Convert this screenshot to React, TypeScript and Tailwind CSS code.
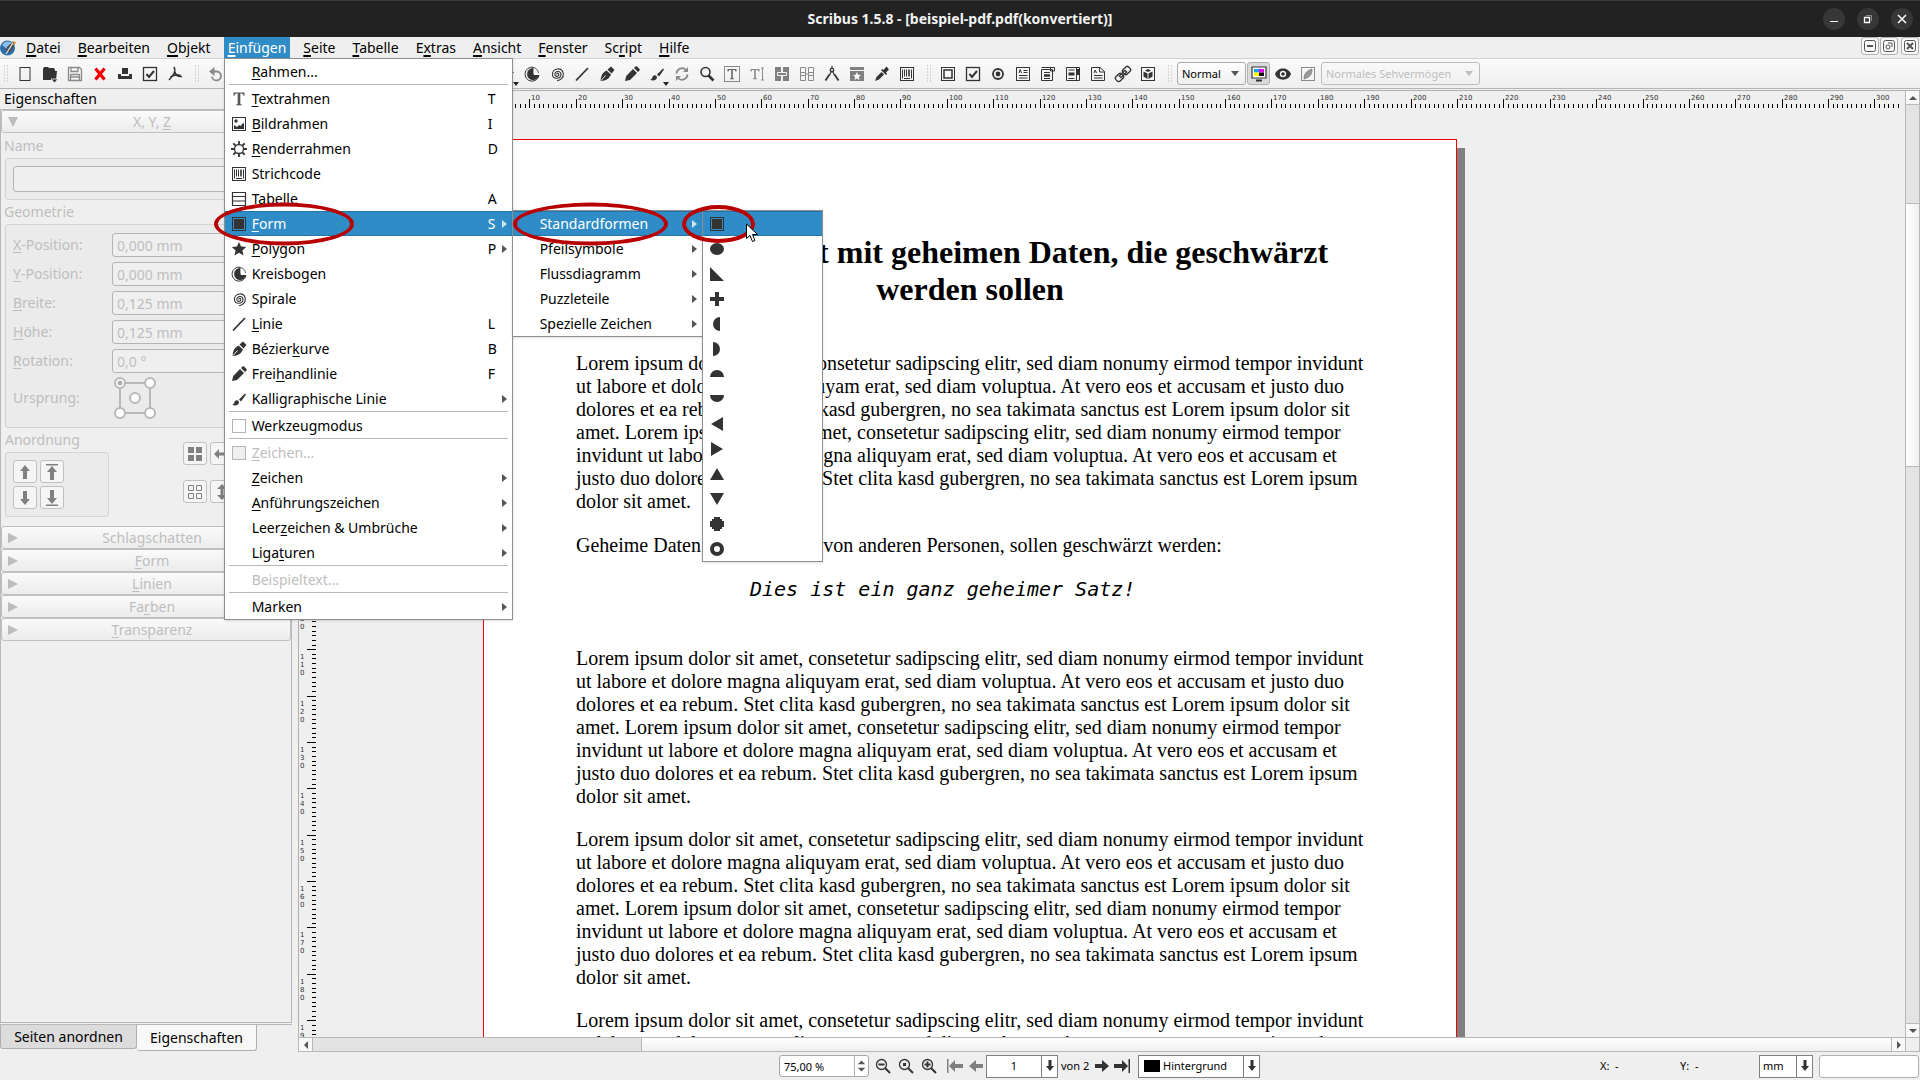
import { useState, type ReactNode } from "react";
import clsx from "clsx";

const DARK = "#333333";
const GREY = "#8a8a8a";

// Icons, all drawn on a 16x16 grid
const icons: Record<string, ReactNode> = {
  new: <rect x="3" y="1.500" width="10" height="13" fill="none" stroke={DARK} />,
  open: (
    <g fill={DARK}>
      <path d="M1 3l1-2h4l1 1h5l1 2v1h2l-1 9H1z" />
      <path d="M9 13h7l-3.500 4z" stroke="#f4f4f4" strokeWidth="0.800" />
    </g>
  ),
  save: (
    <g fill="none" stroke={GREY} strokeWidth="1.300">
      <path d="M1.500 1.500h11l2 2v11h-13z" />
      <path d="M4 1.500v4h7v-4M3.500 8.500h9M3.500 11h9M3.500 14v-6M12.500 14v-6" />
    </g>
  ),
  close: <path d="M3.500 2.500l9 11M12.500 2.500l-9 11" stroke="#f40000" strokeWidth="3.200" />,
  print: <path d="M5 2h6v6H5zM1 8h3v2h8V8h3v5H1z" fill={DARK} />,
  preflight: (
    <g fill="none" stroke={DARK}>
      <rect x="1.500" y="1.500" width="13" height="13" strokeWidth="1.300" />
      <path d="M4.500 8l2.500 3 5-6" strokeWidth="2" />
    </g>
  ),
  pdf: (
    <path
      d="M7 1c2 3 0 8-5 13M7.500 5c1 4 3 6 7.500 5.500M3.500 11c3-2 7-2.500 10-1.500"
      fill="none"
      stroke={DARK}
      strokeWidth="1.600"
    />
  ),
  undo: (
    <g>
      <path d="M4 5.500h5a4.500 4.500 0 1 1-5 5" fill="none" stroke={GREY} strokeWidth="1.800" />
      <path d="M6.500 1v9L1 5.500z" fill={GREY} />
    </g>
  ),
  text: (
    <path
      d="M2.500 1.500h11v3.200h-1c-.3-1.700-.8-2.100-3.200-2.100v9.600c0 1 .4 1.200 1.700 1.300v.7H5v-.7c1.300-.1 1.700-.3 1.700-1.300V2.600c-2.400 0-2.900.4-3.200 2.100h-1z"
      fill="#555555"
    />
  ),
  image: (
    <g>
      <rect x="1.500" y="1.500" width="13" height="13" fill="none" stroke={DARK} />
      <circle cx="5" cy="5" r="1.700" fill={DARK} />
      <path d="M3 13V9l3 2 2-2 2 1 1-2 2-1v6z" fill={DARK} />
    </g>
  ),
  render: (
    <g fill="none" stroke={DARK}>
      <circle cx="8" cy="8" r="4.500" strokeWidth="1.300" />
      <path
        d="M8 0v3M8 13v3M0 8h3M13 8h3M2.300 2.300l2.200 2.200M11.500 11.500l2.200 2.200M2.300 13.700l2.200-2.200M11.500 4.500l2.200-2.200"
        strokeWidth="1.800"
      />
    </g>
  ),
  barcode: (
    <g>
      <rect x="1.500" y="1.500" width="13" height="13" fill="none" stroke={DARK} />
      <path d="M3.500 3.500v9M5.500 3.500v7M7.500 3.500v7M12.500 3.500v9" stroke={DARK} />
      <path d="M10 3.500v7" stroke={DARK} strokeWidth="1.600" />
      <path d="M5 12.500h6" stroke={DARK} />
    </g>
  ),
  table: (
    <path d="M1.500 1.500h13v13h-13zM1.500 5.500h13M1.500 10h13" fill="none" stroke={DARK} strokeWidth="1.200" />
  ),
  shape: (
    <g>
      <rect x="1.500" y="1.500" width="13" height="13" fill="none" stroke={DARK} />
      <rect x="3" y="3" width="10" height="10" fill={DARK} />
    </g>
  ),
  polygon: <path d="M8 1l2.100 4.600 5.100.5-3.800 3.400 1.100 5L8 11.800l-4.500 2.700 1.100-5L.8 6.100l5.100-.5z" fill={DARK} />,
  arc: (
    <g>
      <path d="M9 1.200A7 7 0 1 0 15 9" fill="none" stroke={DARK} />
      <path d="M9 2v5l1 2h5a6 6 0 1 1-6-7z" fill={DARK} />
      <path d="M9 8V1.500A6.500 6.500 0 0 1 14.500 7" fill="none" stroke={DARK} strokeWidth="0.800" />
    </g>
  ),
  spiral: (
    <path
      d="M8 8.500c-.8-1.400 1.600-1.800 1.800 0 .2 2.400-3.800 2.600-4 0-.2-3.800 6-4.200 6.200 0 .2 5-8.400 5-8.600 0C3.200 2 13.500.5 14.300 7.500c.4 4.500-3 7-6.300 7.200"
      fill="none"
      stroke={DARK}
      strokeWidth="1.100"
    />
  ),
  line: <path d="M2 14.500L14 2" stroke={DARK} strokeWidth="1.800" />,
  bezier: (
    <g>
      <path d="M1.500 15c.5-5 1.500-8 6-10.500l4.500 4C10 13 7 14.500 1.500 15z" fill={DARK} />
      <path d="M8.500 3.500l3.500-3 3.500 3.500-3 3.500z" fill={DARK} />
      <path d="M2 14.500l4.500-5" stroke="#ffffff" strokeWidth="0.900" />
    </g>
  ),
  pencil: (
    <path d="M1 15l1.200-5L9 3l4 4-7 7zM10 2l1.500-1.500c.5-.5 1-.5 1.500 0l2.500 2.500c.5.500.5 1 0 1.500L14 6z" fill={DARK} />
  ),
  brush: (
    <path d="M1 13.500c2.500 0 2-2 3-3.500 1.500-1.500 4-.5 4 1.500-.5 3.500-5 3.500-7 2zM8 8.500l6-6 1 1-5 7z" fill={DARK} />
  ),
  rotate: (
    <g fill="none" stroke={GREY} strokeWidth="1.800">
      <path d="M2.500 7.500A5.500 5.500 0 0 1 12 4M13.500 8.500A5.500 5.500 0 0 1 4 12" />
      <path d="M14 1v5H9zM2 15v-5h5z" fill={GREY} stroke="none" />
    </g>
  ),
  zoom: (
    <g fill="none" stroke={DARK}>
      <circle cx="6.500" cy="6" r="4.500" strokeWidth="1.600" />
      <path d="M9.500 9.500l5 5" strokeWidth="2.600" />
    </g>
  ),
  textEdit: (
    <g>
      <rect x="0.500" y="0.500" width="15" height="15" fill="none" stroke={GREY} />
      <path d="M3.500 3h9v2.500h-1c-.2-1.200-.6-1.500-2.700-1.500v7.500c0 .8.300.9 1.300 1v.7H5.900v-.7c1-.1 1.300-.2 1.300-1V4c-2.100 0-2.500.3-2.700 1.500h-1z" fill="#666666" />
    </g>
  ),
  storyEdit: (
    <g>
      <path d="M1.500 3h9v2.500h-1C9.300 4.300 8.900 4 6.800 4v7.500c0 .8.300.9 1.300 1v.7H3.900v-.7c1-.1 1.300-.2 1.300-1V4C3.100 4 2.700 4.300 2.500 5.500h-1z" fill={GREY} />
      <path d="M12 2h3M12 14h3M13.500 2v12" stroke={GREY} fill="none" />
    </g>
  ),
  link: (
    <g>
      <path d="M1 1h6v14H1zM9 1h6v14H9z" fill="#808080" />
      <path d="M3.500 6.500h9v3h-9z" fill="#808080" stroke="#f4f4f4" />
    </g>
  ),
  unlink: (
    <g fill="none" stroke={GREY}>
      <path d="M1.500 1.500h5v13h-5zM9.500 1.500h5v13h-5zM1.500 6.500h5M1.500 9.500h5M9.500 6.500h5M9.500 9.500h5M6.500 8h3" />
    </g>
  ),
  measure: (
    <g fill="none" stroke={DARK}>
      <circle cx="8" cy="4" r="1.700" strokeWidth="1.300" />
      <path d="M8 0v2M7.300 5.500L5.500 9M8.700 5.500l1.800 3.500" strokeWidth="1.200" />
      <path d="M5.500 8.500l-4 6M10.500 8.500l4 6" strokeWidth="1.800" />
    </g>
  ),
  copyProps: (
    <g>
      <path d="M1 1h14v3H1zM1 5h14v10H1z" fill="#808080" />
      <path d="M8 6l1.200 2.700 2.800.3-2.100 2 .6 3L8 12.500 5.500 14l.6-3L4 9l2.800-.3z" fill="#fafafa" />
    </g>
  ),
  eyedropper: (
    <path d="M1 15l1.500-4 5-5 2.500 2.500-5 5zM7 4l1-1 1.500 1 3-3.500 2.500 3-3 3 1 1.500-1 1z" fill={DARK} />
  ),
  pushButton: (
    <g fill="none" stroke={DARK}>
      <rect x="1.500" y="1.500" width="13" height="13" />
      <rect x="4" y="4" width="8" height="8" strokeWidth="1.500" />
    </g>
  ),
  radio: (
    <g>
      <circle cx="8" cy="8" r="5" fill="none" stroke={DARK} strokeWidth="1.800" />
      <circle cx="8" cy="8" r="2.400" fill={DARK} />
    </g>
  ),
  textField: (
    <g fill="none" stroke={DARK}>
      <rect x="1.500" y="1.500" width="13" height="13" />
      <path d="M4 7l1.200-3.500L6.500 7M8.500 4.500h4M8.500 6.500h4M4 9.500h8.500M4 12h8.500" />
    </g>
  ),
  combo: (
    <g fill="none" stroke={DARK}>
      <path d="M1.500 3.500h11v11h-11zM1.500 1.500h13v3.500h-4v-3" />
      <path d="M4 6.500h6M4 12.500h6" />
      <path d="M4 9.500h6" strokeWidth="2.500" />
    </g>
  ),
  listBox: (
    <g fill="none" stroke={DARK}>
      <path d="M1.500 1.500h13v13h-13zM11.500 1.500v13" />
      <path d="M3.500 4h6M3.500 12.500h6" />
      <path d="M3.500 8h6M13 3v6" strokeWidth="3" />
    </g>
  ),
  annotation: (
    <g fill="none" stroke={DARK}>
      <path d="M1.500 1.500h8.500l4.500 4v9h-13zM9.500 1.500v4.500h5" />
      <path d="M4 7l1.200-3L6.500 7M4 9.500h8.500M4 12h8.500" />
    </g>
  ),
  linkAnnot: (
    <g fill="none" stroke={DARK} strokeWidth="1.300" transform="rotate(-45 8 8)">
      <rect x="-1" y="5" width="8" height="6" rx="2" />
      <rect x="9" y="5" width="8" height="6" rx="2" />
      <rect x="4" y="6.800" width="8" height="2.400" />
    </g>
  ),
  threeD: (
    <g>
      <rect x="1.500" y="1.500" width="13" height="13" fill="none" stroke={DARK} />
      <path d="M8 3l3 1.500L8 6 5 4.500zM3.500 5.500L7.500 7.500V13l-4-2.500zM12.500 5.500L8.500 7.500V13l4-2.500z" fill={DARK} />
    </g>
  ),
  cms: (
    <g>
      <path d="M1 1h14v11H1z" fill="#ffffff" stroke={DARK} strokeWidth="1.200" />
      <path d="M3 3h5v3.500H3z" fill="#00a8ec" />
      <path d="M8 3h5v3.500H8z" fill="#f000e8" />
      <path d="M3 6.500h5V10H3z" fill="#fff200" />
      <path d="M8 6.500h5V10H8z" fill="#111111" />
      <path d="M5 14.500h6" stroke={DARK} strokeWidth="2" />
    </g>
  ),
  eye: (
    <g>
      <path d="M0 8c2.500-7.500 13.500-7.500 16 0-2.500 7.500-13.500 7.500-16 0z" fill={DARK} />
      <circle cx="8" cy="8" r="3.200" fill="#f4f4f4" />
      <circle cx="8" cy="8" r="1.800" fill={DARK} />
    </g>
  ),
  editPreview: (
    <g>
      <rect x="1.500" y="1.500" width="13" height="13" fill="none" stroke={GREY} />
      <path d="M4 13c0-5 2-8 8-10 0 6-2 8-8 10z" fill="#999999" stroke="#777777" strokeWidth="0.700" />
    </g>
  ),
  circle: <ellipse cx="8" cy="8" rx="7" ry="6" fill={DARK} />,
  rightTriangle: <path d="M1 1v14h14z" fill={DARK} />,
  cross: <path d="M6 1h4v5h5v4h-5v5H6v-5H1V6h5z" fill={DARK} />,
  halfLeft: <path d="M11 1v14a7 7 0 0 1 0-14z" fill={DARK} />,
  halfRight: <path d="M4 1v14A7 7 0 0 0 4 1z" fill={DARK} />,
  halfTop: <path d="M1 11a7 7 0 0 1 14 0z" fill={DARK} />,
  halfBottom: <path d="M1 4a7 7 0 0 0 14 0z" fill={DARK} />,
  triLeft: <path d="M14 1v14L2 8z" fill={DARK} />,
  triRight: <path d="M2 1v14l12-7z" fill={DARK} />,
  triUp: <path d="M8 2l7 12H1z" fill={DARK} />,
  triDown: <path d="M8 14L1 2h14z" fill={DARK} />,
  octagon: <path d="M5 1h6v2h2v2h2v6h-2v2h-2v2H5v-2H3v-2H1V5h2V3h2z" fill={DARK} />,
  ring: <circle cx="8" cy="8" r="5" fill="none" stroke={DARK} strokeWidth="4" />,
  raise: <path d="M8 1l5 6h-3v8H6V7H3z" fill="#808080" />,
  lower: <path d="M8 15l5-6h-3V1H6v8H3z" fill="#808080" />,
  top: <path d="M2 0h12v1.500H2zM8 2l5 6h-3v8H6V8H3z" fill="#808080" />,
  bottom: <path d="M2 14.500h12V16H2zM8 14l5-6h-3V0H6v8H3z" fill="#808080" />,
  group: <path d="M1 1h6v6H1zM9 1h6v6H9zM1 9h6v6H1zM9 9h6v6H9z" fill="#808080" />,
  ungroup: <path d="M1.500 1.500h5v5h-5zM9.500 1.500h5v5h-5zM1.500 9.500h5v5h-5zM9.500 9.500h5v5h-5z" fill="none" stroke="#808080" />,
  flipH: <path d="M0 8l5-5v3.500h6V3l5 5-5 5V9.500H5V13z" fill="#808080" />,
  flipV: <path d="M8 0l5 5H9.500v6H13l-5 5-5-5h3.500V5H3z" fill="#808080" />,
  zoomOut: (
    <g fill="none" stroke={DARK}>
      <circle cx="6.500" cy="6.500" r="5" strokeWidth="1.300" />
      <path d="M3.500 6.500h6M10 10l5 5" strokeWidth="2" />
    </g>
  ),
  zoomFit: (
    <g fill="none" stroke={DARK}>
      <circle cx="6.500" cy="6.500" r="5" strokeWidth="1.300" />
      <path d="M5 6.500h3" strokeWidth="3" />
      <path d="M10 10l5 5" strokeWidth="2" />
    </g>
  ),
  zoomIn: (
    <g fill="none" stroke={DARK}>
      <circle cx="6.500" cy="6.500" r="5" strokeWidth="1.300" />
      <path d="M3.500 6.500h6M6.500 3.500v6M10 10l5 5" strokeWidth="2" />
    </g>
  ),
  first: <path d="M0 1h1.500v14H0zM2 8l6-6v4h8v4H8v4z" fill="#808080" />,
  prev: <path d="M1 8l7-6v4h7v4H8v4z" fill="#808080" />,
  next: <path d="M15 8L8 2v4H1v4h7v4z" fill={DARK} />,
  last: <path d="M14.500 1H16v14h-1.500zM14 8L8 2v4H0v4h8v4z" fill={DARK} />,
  downArrow: <path d="M8 13l4-5H9.500V2h-3v6H4z" fill={DARK} />,
};

function Icon({ name }: { name: string }) {
  return (
    <svg viewBox="0 0 16 16" className="h-4 w-4 shrink-0 overflow-visible" aria-hidden="true">
      {icons[name]}
    </svg>
  );
}

// "_" marks the letter that gets the access key underline
function Mnemonic({ text, thick }: { text: string; thick?: boolean }) {
  const at = text.indexOf("_");
  if (at < 0) return <span>{text}</span>;
  return (
    <span>
      {text.slice(0, at)}
      <span className={clsx("underline underline-offset-2", thick ? "decoration-2" : "decoration-1")}>
        {text[at + 1]}
      </span>
      {text.slice(at + 2)}
    </span>
  );
}

interface MenuEntry {
  label?: string;
  name?: string;
  icon?: string;
  shortcut?: string;
  arrow?: boolean;
  check?: boolean;
  disabled?: boolean;
  active?: boolean;
  mark?: ReactNode;
  submenu?: ReactNode;
}

const DIVIDER = "divider";

const shapeEntries: MenuEntry[] = [
  { name: "Rechteck", icon: "shape", active: true, mark: <Mark className="-left-[21px] h-[38px] w-[73px]" /> },
  { name: "Ellipse", icon: "circle" },
  { name: "Dreieck", icon: "rightTriangle" },
  { name: "Kreuz", icon: "cross" },
  { name: "Halbkreis links", icon: "halfLeft" },
  { name: "Halbkreis rechts", icon: "halfRight" },
  { name: "Halbkreis oben", icon: "halfTop" },
  { name: "Halbkreis unten", icon: "halfBottom" },
  { name: "Pfeil links", icon: "triLeft" },
  { name: "Pfeil rechts", icon: "triRight" },
  { name: "Pfeil oben", icon: "triUp" },
  { name: "Pfeil unten", icon: "triDown" },
  { name: "Achteck", icon: "octagon" },
  { name: "Ring", icon: "ring" },
];

const formEntries: MenuEntry[] = [
  {
    label: "Standardformen",
    arrow: true,
    active: true,
    mark: <Mark className="left-0 h-[43px] w-[155px]" />,
    submenu: <Menu entries={shapeEntries} className="-top-px left-full w-[121px]" />,
  },
  { label: "Pfeilsymbole", arrow: true },
  { label: "Flussdiagramm", arrow: true },
  { label: "Puzzleteile", arrow: true },
  { label: "Spezielle Zeichen", arrow: true },
];

const insertEntries: (MenuEntry | typeof DIVIDER)[] = [
  { label: "_Rahmen..." },
  DIVIDER,
  { label: "_Textrahmen", icon: "text", shortcut: "T" },
  { label: "_Bildrahmen", icon: "image", shortcut: "I" },
  { label: "_Renderrahmen", icon: "render", shortcut: "D" },
  { label: "Strichcode", icon: "barcode" },
  { label: "_Tabelle", icon: "table", shortcut: "A" },
  {
    label: "_Form",
    icon: "shape",
    shortcut: "S",
    arrow: true,
    active: true,
    mark: <Mark className="-left-[11px] h-[43px] w-[140px]" />,
    submenu: <Menu entries={formEntries} className="-top-px left-full w-[191px]" />,
  },
  { label: "_Polygon", icon: "polygon", shortcut: "P", arrow: true },
  { label: "Kreisbogen", icon: "arc" },
  { label: "Spirale", icon: "spiral" },
  { label: "_Linie", icon: "line", shortcut: "L" },
  { label: "Bézier_kurve", icon: "bezier", shortcut: "B" },
  { label: "Frei_handlinie", icon: "pencil", shortcut: "F" },
  { label: "Kalligraphische Linie", icon: "brush", arrow: true },
  DIVIDER,
  { label: "Werkzeugmodus", check: true },
  DIVIDER,
  { label: "_Zeichen...", check: true, disabled: true },
  { label: "_Zeichen", arrow: true },
  { label: "_Anführungszeichen", arrow: true },
  { label: "Leer_zeichen & Umbrüche", arrow: true },
  { label: "Liga_turen", arrow: true },
  DIVIDER,
  { label: "Beispieltext...", disabled: true },
  DIVIDER,
  { label: "Marken", arrow: true },
];

// Red ring drawn round a menu entry
function Mark({ className }: { className: string }) {
  return (
    <span
      className={clsx(
        "pointer-events-none absolute top-1/2 z-20 -translate-y-1/2 rounded-[50%] border-4 border-[#b90000]",
        className
      )}
    />
  );
}

function MenuItem({ entry }: { entry: MenuEntry }) {
  const row = clsx(
    "flex h-[25px] w-full items-center border-y pl-[6px] text-left whitespace-nowrap",
    entry.active ? "border-[#2674a8] bg-[#308cc6] text-white" : "border-transparent",
    entry.disabled && "text-[#bebebe]"
  );

  if (entry.check) {
    return (
      <li>
        <label className={row}>
          <input
            type="checkbox"
            disabled={entry.disabled}
            className="mx-px h-[14px] w-[14px] appearance-none border border-[#b4b4b4] bg-white disabled:bg-[#efefef]"
          />
          <span className="ml-[5px]">
            <Mnemonic text={entry.label ?? ""} />
          </span>
        </label>
      </li>
    );
  }

  return (
    <li className="relative">
      <button type="button" disabled={entry.disabled} aria-label={entry.name} className={row}>
        <span className="h-4 w-4 shrink-0">{entry.icon && <Icon name={entry.icon} />}</span>
        <span className="ml-[5px] flex-1">
          <Mnemonic text={entry.label ?? ""} />
        </span>
        <span className="w-[14px]">{entry.shortcut}</span>
        <span className="w-[10px]">
          {entry.arrow && (
            <svg viewBox="0 0 5 8" className="h-2 w-[5px]" aria-hidden="true">
              <path d="M0 0l5 4-5 4z" fill={entry.active ? "#cfe4f2" : "#555555"} />
            </svg>
          )}
        </span>
      </button>
      {entry.submenu}
      {entry.mark}
    </li>
  );
}

function Menu({ entries, className }: { entries: (MenuEntry | typeof DIVIDER)[]; className: string }) {
  return (
    <ul className={clsx("absolute border border-[#8f8f8f] bg-white text-black shadow-sm", className)}>
      {entries.map((entry, i) =>
        typeof entry === "string" ? (
          <li key={i} role="separator" className="mx-1 h-[2px] border-t border-[#b8b8b8]" />
        ) : (
          <MenuItem key={i} entry={entry} />
        )
      )}
    </ul>
  );
}

function TitleBar() {
  return (
    <header className="grid h-[37px] shrink-0 grid-cols-[1fr_auto_1fr] items-center border-t border-[#3a3a3a] bg-[#222222] text-[14px] font-bold text-[#f2f2f2]">
      <span />
      <h1>Scribus 1.5.8 - [beispiel-pdf.pdf(konvertiert)]</h1>
      <div className="flex justify-end gap-3 pr-[7px]">
        <button type="button" aria-label="Minimieren" className="h-[22px] w-[22px] rounded-full bg-[#373737]">
          <svg viewBox="0 0 22 22" aria-hidden="true">
            <path d="M7 13.500h8" stroke="#ffffff" />
          </svg>
        </button>
        <button type="button" aria-label="Wiederherstellen" className="h-[22px] w-[22px] rounded-full bg-[#373737]">
          <svg viewBox="0 0 22 22" fill="none" aria-hidden="true">
            <path d="M9 7.500h5.500V13" stroke="#8a8a8a" />
            <path d="M7.500 9.500h5v5h-5z" stroke="#ffffff" strokeWidth="1.300" />
          </svg>
        </button>
        <button type="button" aria-label="Schließen" className="h-[22px] w-[22px] rounded-full bg-[#373737]">
          <svg viewBox="0 0 22 22" aria-hidden="true">
            <path d="M7 7l8 8M15 7l-8 8" stroke="#ffffff" strokeWidth="1.500" />
          </svg>
        </button>
      </div>
    </header>
  );
}

const menus = [
  "_Datei",
  "_Bearbeiten",
  "_Objekt",
  "_Einfügen",
  "_Seite",
  "_Tabelle",
  "E_xtras",
  "_Ansicht",
  "_Fenster",
  "Sc_ript",
  "_Hilfe",
];

function MenuBar() {
  const [open, setOpen] = useState(true);
  const mdi = "flex h-[18px] w-[18px] items-center justify-center rounded-[3px] border border-[#b0b0b0] bg-[#f8f8f8]";
  return (
    <nav className="flex h-[22px] shrink-0 items-start border-b border-[#d0d0d0]">
      <svg viewBox="0 0 16 16" className="mt-[3px] h-4 w-4" aria-hidden="true">
        <circle cx="7.500" cy="8" r="7.500" fill="#2b6ea8" />
        <path d="M2 5c3-5 9-4 11-1L7 9z" fill="#8cc0e6" />
        <path d="M6 14c-1-5 1-9 8-12 1 5-2 9-8 12z" fill="#4a4f55" />
        <path d="M6 14L13 3" stroke="#e8e8e8" strokeWidth="1.200" />
        <path d="M12 1l4 1-2 4z" fill="#c08a3e" />
      </svg>
      <div className="ml-[6px] flex gap-[9px]">
        {menus.map((menu) => {
          const insert = menu === "_Einfügen";
          return (
            <div key={menu} className="relative">
              <button
                type="button"
                onClick={() => insert && setOpen(!open)}
                className={clsx(
                  "h-[21px] px-1 leading-5",
                  insert && open && "bg-[#308cc6] text-white"
                )}
              >
                <Mnemonic text={menu} thick />
              </button>
              {insert && open && (
                <div className="absolute top-full left-0 z-30">
                  <Menu entries={insertEntries} className="top-0 left-0 w-[289px]" />
                </div>
              )}
            </div>
          );
        })}
      </div>
      <div className="ml-auto flex gap-px pr-px">
        <button type="button" aria-label="Dokument minimieren" className={mdi}>
          <svg viewBox="0 0 12 12" className="h-3 w-3" fill="none" stroke="#555555" aria-hidden="true">
            <rect x="0.500" y="0.500" width="11" height="11" rx="2" />
            <path d="M3 6h6" strokeWidth="2" />
          </svg>
        </button>
        <button type="button" aria-label="Dokument wiederherstellen" className={mdi}>
          <svg viewBox="0 0 12 12" className="h-3 w-3" fill="none" stroke="#555555" aria-hidden="true">
            <rect x="0.500" y="0.500" width="11" height="11" rx="2" />
            <circle cx="5" cy="7" r="2" />
            <path d="M5 3h4v4" />
          </svg>
        </button>
        <button type="button" aria-label="Dokument schließen" className={clsx(mdi, "ml-[2px]")}>
          <svg viewBox="0 0 12 12" className="h-3 w-3" fill="none" stroke="#555555" aria-hidden="true">
            <rect x="0.500" y="0.500" width="11" height="11" rx="2" />
            <path d="M3 3l6 6M9 3l-6 6" strokeWidth="2" />
          </svg>
        </button>
      </div>
    </nav>
  );
}

function Handle({ className = "w-4" }: { className?: string }) {
  return (
    <svg viewBox="0 0 4 18" preserveAspectRatio="xMaxYMid meet" className={clsx("h-[18px] shrink-0 pr-1", className)} aria-hidden="true">
      {[1, 4, 7, 10, 13, 16].map((y) => (
        <path key={y} d={`M0 ${y}h1M3 ${y}h1`} stroke="#b0b0b0" />
      ))}
    </svg>
  );
}

function ToolGroup({ names, popups = [] }: { names: string[]; popups?: string[] }) {
  return (
    <div className="flex">
      {names.map((name) => (
        <button key={name} type="button" aria-label={name} className="relative flex h-[25px] w-[25px] items-center justify-center">
          <Icon name={name} />
          {popups.includes(name) && (
            <svg viewBox="0 0 6 4" className="absolute right-0 bottom-0 h-1 w-[6px]" aria-hidden="true">
              <path d="M0 0h6L3 4z" fill="#222222" />
            </svg>
          )}
        </button>
      ))}
    </div>
  );
}

function ToolBar() {
  return (
    <div className="flex h-[30px] shrink-0 items-center border-b border-[#b4b4b4] bg-linear-to-b from-[#fafafa] to-[#efefef]">
      <Handle className="w-3" />
      <ToolGroup names={["new", "open", "save", "close", "print", "preflight", "pdf"]} />
      <Handle />
      <ToolGroup names={["undo", "rotate", "lower", "raise", "top"]} />
      <Handle />
      <ToolGroup names={["next", "text", "image", "render", "table", "shape", "polygon"]} popups={["shape", "polygon"]} />
      <ToolGroup
        names={[
          "arc",
          "spiral",
          "line",
          "bezier",
          "pencil",
          "brush",
          "rotate",
          "zoom",
          "textEdit",
          "storyEdit",
          "link",
          "unlink",
          "measure",
          "copyProps",
          "eyedropper",
          "barcode",
        ]}
        popups={["brush"]}
      />
      <Handle />
      <ToolGroup
        names={["pushButton", "preflight", "radio", "textField", "combo", "listBox", "annotation", "linkAnnot", "threeD"]}
      />
      <Handle />
      <div className="relative ml-px flex items-center">
        <select
          aria-label="Bildvorschau"
          className="h-[23px] w-[69px] appearance-none rounded-[3px] border border-[#aaaaaa] bg-linear-to-b from-white to-[#efefef] px-1 text-[11px]"
        >
          <option>Normal</option>
        </select>
        <Triangle color="#555555" />
      </div>
      <button
        type="button"
        aria-label="Farbmanagement"
        aria-pressed="true"
        className="ml-px flex h-[23px] w-[23px] items-center justify-center rounded-[3px] border border-[#b0b0b0] bg-[#dadada]"
      >
        <Icon name="cms" />
      </button>
      <ToolGroup names={["eye", "editPreview"]} />
      <div className="relative ml-px flex items-center">
        <select
          disabled
          aria-label="Sehvermögen"
          className="h-[23px] w-[159px] appearance-none rounded-[3px] border border-[#bcbcbc] px-1 text-[11px] text-[#bebebe]"
        >
          <option>Normales Sehvermögen</option>
        </select>
        <Triangle color="#bebebe" />
      </div>
    </div>
  );
}

function Triangle({ color }: { color: string }) {
  return (
    <svg viewBox="0 0 8 5" className="pointer-events-none absolute right-[7px] h-[5px] w-2" aria-hidden="true">
      <path d="M0 0h8L4 5z" fill={color} />
    </svg>
  );
}

const fields = [
  { id: "xpos", label: "_X-Position:", value: "0,000 mm" },
  { id: "ypos", label: "_Y-Position:", value: "0,000 mm" },
  { id: "width", label: "_Breite:", value: "0,125 mm" },
  { id: "height", label: "_Höhe:", value: "0,125 mm" },
  { id: "rotation", label: "_Rotation:", value: "0,0 °" },
];

function SectionButton({ label, expanded }: { label: string; expanded?: boolean }) {
  return (
    <button
      type="button"
      disabled
      className="relative flex h-[23px] w-full items-center justify-center rounded-[3px] border border-[#c0c0c0] bg-linear-to-b from-[#fafafa] to-[#ececec] pl-3"
    >
      <svg viewBox="0 0 10 10" className="absolute left-[6px] h-[10px] w-[10px]" aria-hidden="true">
        <path d={expanded ? "M0 0h10L5 10z" : "M0 0l10 5-10 5z"} fill="#bcbcbc" />
      </svg>
      <Mnemonic text={label} />
    </button>
  );
}

function PanelButton({ icon, label }: { icon: string; label: string }) {
  return (
    <button
      type="button"
      disabled
      aria-label={label}
      className="flex h-[23px] w-6 items-center justify-center rounded-[3px] border border-[#c0c0c0] bg-[#f5f5f5]"
    >
      <Icon name={icon} />
    </button>
  );
}

function PropertiesPanel() {
  const group = "rounded-[3px] border border-[#d4d4d4] bg-[#ebebeb]";
  return (
    <aside className="flex w-[292px] shrink-0 flex-col">
      <h2 className="h-5 pl-1 leading-5">Eigenschaften</h2>
      <div className="flex-1 border border-[#b8b8b8] text-[#bebebe]">
        <SectionButton label="X, Y, _Z" expanded />
        <label htmlFor="name" className="block h-[25px] pl-[3px] leading-[25px]">
          Name
        </label>
        <div className={clsx(group, "mx-1 p-[7px]")}>
          <input id="name" disabled className="block h-[26px] w-full rounded-[3px] border border-[#b4b4b4] bg-[#efefef] px-1" />
        </div>
        <p className="h-6 pl-[3px] leading-6">Geometrie</p>
        <div className={clsx(group, "mx-1 px-[7px] pt-2 pb-1")}>
          <div className="flex flex-col gap-[5px]">
            {fields.map((field) => (
              <div key={field.id} className="flex items-center">
                <label htmlFor={field.id} className="w-[99px]">
                  <Mnemonic text={field.label} />
                </label>
                <input
                  id={field.id}
                  disabled
                  defaultValue={field.value}
                  className="h-6 w-[120px] rounded-[3px] border border-[#b4b4b4] bg-[#efefef] px-1"
                />
              </div>
            ))}
          </div>
          <div className="flex h-[50px] items-center">
            <span className="w-[99px]">Ursprung:</span>
            <svg viewBox="0 0 46 46" className="h-[46px] w-[46px]" fill="#ffffff" stroke="#b8b8b8" strokeWidth="2" aria-hidden="true">
              <path d="M8 8h30v30H8z" fill="none" />
              <circle cx="8" cy="8" r="5" />
              <circle cx="8" cy="8" r="2.500" fill="#b0b0b0" stroke="none" />
              <circle cx="38" cy="8" r="5" />
              <circle cx="8" cy="38" r="5" />
              <circle cx="38" cy="38" r="5" />
              <circle cx="23" cy="23" r="5" />
            </svg>
          </div>
        </div>
        <div className="flex pl-1">
          <div>
            <p className="h-6 leading-6">Anordnung</p>
            <div className={clsx(group, "grid w-[104px] grid-cols-[24px_24px] gap-[3px] p-[7px]")}>
              <PanelButton icon="raise" label="Eine Ebene hoch" />
              <PanelButton icon="top" label="Ganz nach oben" />
              <PanelButton icon="lower" label="Eine Ebene runter" />
              <PanelButton icon="bottom" label="Ganz nach unten" />
            </div>
          </div>
          <div className="mt-[14px] ml-[74px] grid grid-cols-[24px_24px] content-start gap-x-[3px] gap-y-[15px]">
            <PanelButton icon="group" label="Gruppieren" />
            <PanelButton icon="flipH" label="Horizontal spiegeln" />
            <PanelButton icon="ungroup" label="Gruppierung aufheben" />
            <PanelButton icon="flipV" label="Vertikal spiegeln" />
          </div>
        </div>
        <div className="mt-[9px]">
          <SectionButton label="Schlagschatten" />
          <SectionButton label="_Form" />
          <SectionButton label="_Linien" />
          <SectionButton label="Fa_rben" />
          <SectionButton label="_Transparenz" />
        </div>
      </div>
      <div className="mt-px flex h-[56px] items-start border-t border-[#b8b8b8]">
        <button type="button" className="h-6 w-[137px] rounded-b-[3px] border border-t-0 border-[#b0b0b0] bg-[#dcdcdc]">
          Seiten anordnen
        </button>
        <button type="button" className="h-[26px] w-[120px] rounded-b-[3px] border border-t-0 border-l-0 border-[#b0b0b0] bg-[#f8f8f8]">
          Eigenschaften
        </button>
      </div>
    </aside>
  );
}

// One millimetre of the document on screen at 75 %
const MM = 974 / 210;

function HorizontalRuler() {
  const ticks = Array.from({ length: 341 }, (_, i) => i - 35);
  return (
    <svg className="block h-[18px] w-full overflow-hidden font-['DejaVu_Sans',sans-serif]" aria-hidden="true">
      {ticks.map((mm) => {
        const x = Math.round(184 + mm * MM);
        const major = mm % 10 === 0;
        return (
          <g key={mm}>
            <rect x={x} y={major ? 8 : 13} width="1" height={major ? 9 : 4} fill="#000000" />
            {major && (
              <text x={x + 2} y="9" fontSize="7" fill="#333333">
                {Math.abs(mm)}
              </text>
            )}
          </g>
        );
      })}
    </svg>
  );
}

function VerticalRuler() {
  const ticks = Array.from({ length: 204 }, (_, i) => i - 5);
  return (
    <svg className="block h-full w-[18px] shrink-0 overflow-hidden font-['DejaVu_Sans',sans-serif]" aria-hidden="true">
      {ticks.map((mm) => {
        const y = Math.round(30 + mm * MM);
        const major = mm % 10 === 0;
        return (
          <g key={mm}>
            <rect x={major ? 8 : 13} y={y} width={major ? 9 : 4} height="1" fill="#000000" />
            {major &&
              String(Math.abs(mm))
                .split("")
                .map((digit, i) => (
                  <text key={i} x="1" y={y + 10 + i * 8} fontSize="7" fill="#333333">
                    {digit}
                  </text>
                ))}
          </g>
        );
      })}
    </svg>
  );
}

const lorem = [
  "Lorem ipsum dolor sit amet, consetetur sadipscing elitr, sed diam nonumy eirmod tempor invidunt",
  "ut labore et dolore magna aliquyam erat, sed diam voluptua. At vero eos et accusam et justo duo",
  "dolores et ea rebum. Stet clita kasd gubergren, no sea takimata sanctus est Lorem ipsum dolor sit",
  "amet. Lorem ipsum dolor sit amet, consetetur sadipscing elitr, sed diam nonumy eirmod tempor",
  "invidunt ut labore et dolore magna aliquyam erat, sed diam voluptua. At vero eos et accusam et",
  "justo duo dolores et ea rebum. Stet clita kasd gubergren, no sea takimata sanctus est Lorem ipsum",
  "dolor sit amet.",
];

function Lorem({ className }: { className: string }) {
  return (
    <p className={className}>
      {lorem.map((line) => (
        <span key={line} className="block">
          {line}
        </span>
      ))}
    </p>
  );
}

function DocumentPage() {
  return (
    <article className="mt-[30px] ml-[166px] h-[1378px] w-[974px] border border-[#f00000] bg-white px-[92px] pt-[94px] font-['Liberation_Serif',serif] text-[20px] leading-[23px] whitespace-nowrap shadow-[8px_9px_0_#808080]">
      <h2 className="flex flex-col items-center text-[32px] leading-[37px] font-bold">
        <span>PDF-Dokument mit geheimen Daten, die geschwärzt</span>
        <span>werden sollen</span>
      </h2>
      <Lorem className="mt-11" />
      <p className="mt-[21px]">Geheime Daten, wie Adressen von anderen Personen, sollen geschwärzt werden:</p>
      <p className="mt-[21px] pl-[174px] font-['DejaVu_Sans_Mono',monospace] italic">Dies ist ein ganz geheimer Satz!</p>
      <Lorem className="mt-[46px]" />
      <Lorem className="mt-5" />
      <Lorem className="mt-5" />
    </article>
  );
}

function ScrollArrow({ d, label, className }: { d: string; label: string; className: string }) {
  return (
    <button type="button" aria-label={label} className={clsx("flex shrink-0 items-center justify-center border-[#b8b8b8] bg-[#f8f8f8]", className)}>
      <svg viewBox="0 0 8 8" className="h-2 w-2" aria-hidden="true">
        <path d={d} fill="#555555" />
      </svg>
    </button>
  );
}

function Canvas() {
  return (
    <main className="mt-px ml-[6px] flex min-w-0 flex-1 flex-col border-t border-[#b0b0b0]">
      <div className="flex min-h-0 flex-1 border-l border-[#b0b0b0]">
        <div className="flex min-w-0 flex-1 flex-col">
          <HorizontalRuler />
          <div className="flex min-h-0 flex-1">
            <VerticalRuler />
            <div className="min-w-0 flex-1 overflow-hidden">
              <DocumentPage />
            </div>
          </div>
        </div>
        <div className="flex w-[15px] flex-col border-x border-[#b8b8b8] bg-[#e3e3e3]">
          <ScrollArrow d="M0 6h8L4 2z" label="Nach oben" className="h-[14px] border-b" />
          <div className="mt-[98px] h-[264px] border-y border-[#b8b8b8] bg-linear-to-r from-white to-[#f0f0f0]" />
          <ScrollArrow d="M0 2h8L4 6z" label="Nach unten" className="mt-auto h-[14px] border-t" />
        </div>
      </div>
      <div className="flex h-[15px] shrink-0 border-y border-l border-[#b8b8b8]">
        <ScrollArrow d="M6 0v8L2 4z" label="Nach links" className="w-[14px] border-r" />
        <div className="w-[328px] bg-[#e3e3e3]" />
        <div className="flex-1 border-l border-[#b8b8b8] bg-linear-to-b from-white to-[#f0f0f0]" />
        <ScrollArrow d="M2 0v8l4-4z" label="Nach rechts" className="w-[15px] border-x" />
        <div className="w-[14px] border-r border-[#b8b8b8]" />
      </div>
      <StatusBar />
    </main>
  );
}

function IconButton({ name, label, className = "w-[23px]" }: { name: string; label: string; className?: string }) {
  return (
    <button type="button" aria-label={label} className={clsx("flex h-[23px] items-center justify-center", className)}>
      <Icon name={name} />
    </button>
  );
}

interface ComboProps {
  label: string;
  value: string;
  className: string;
  centered?: boolean;
  children?: ReactNode;
}

function Combo({ label, value, className, centered, children }: ComboProps) {
  return (
    <div className={clsx("flex h-[23px] items-center border border-[#808080] bg-white", className)}>
      {children}
      <select
        aria-label={label}
        className={clsx("h-full min-w-0 flex-1 appearance-none px-[3px]", centered && "[text-align-last:center]")}
      >
        <option>{value}</option>
      </select>
      <span className="flex h-full w-4 items-center justify-center border-l border-[#808080]">
        <Icon name="downArrow" />
      </span>
    </div>
  );
}

function StatusBar() {
  return (
    <footer className="flex h-[28px] shrink-0 items-center text-[11px]">
      <div className="flex flex-1 items-center pl-[481px]">
        <div className="flex h-[22px] w-[90px] items-center rounded-[3px] border border-[#a8a8a8] bg-white">
          <input aria-label="Vergrößerung" defaultValue="75,00 %" className="h-full min-w-0 flex-1 px-1" />
          <svg viewBox="0 0 14 20" className="h-5 w-[14px] border-l border-[#b0b0b0]" aria-hidden="true">
            <path d="M3 8l4-4 4 4zM3 12l4 4 4-4z" fill="#555555" />
          </svg>
        </div>
        <div className="ml-[2px] flex">
          <IconButton name="zoomOut" label="Verkleinern" />
          <IconButton name="zoomFit" label="Auf 100 % zoomen" />
          <IconButton name="zoomIn" label="Vergrößern" />
        </div>
        <div className="ml-[3px] flex">
          <IconButton name="first" label="Erste Seite" />
          <IconButton name="prev" label="Vorherige Seite" className="w-5" />
        </div>
        <Combo label="Seite" value="1" className="w-[72px]" centered />
        <span className="w-9 pl-[3px] whitespace-nowrap">von 2</span>
        <IconButton name="next" label="Nächste Seite" className="w-4" />
        <IconButton name="last" label="Letzte Seite" className="w-6" />
        <Combo label="Ebene" value="Hintergrund" className="ml-1 w-[122px]">
          <span className="ml-[5px] h-3 w-4 bg-black" />
        </Combo>
      </div>
      <div className="flex items-center">
        <span className="w-[80px] whitespace-pre">X:  -</span>
        <span className="w-[79px] whitespace-pre">Y:  -</span>
        <Combo label="Einheit" value="mm" className="w-[54px]" />
        <input aria-label="Status" className="mr-px ml-[6px] h-[23px] w-[100px] rounded-[3px] border border-[#b0b0b0] bg-white" />
      </div>
    </footer>
  );
}

export default function App() {
  return (
    <div className="relative flex h-screen w-full flex-col overflow-hidden bg-[#efefef] font-['Noto_Sans',sans-serif] text-[14px] leading-5 text-black">
      <TitleBar />
      <MenuBar />
      <ToolBar />
      <div className="flex min-h-0 flex-1">
        <PropertiesPanel />
        <Canvas />
      </div>
      <svg viewBox="0 0 13 20" className="pointer-events-none absolute top-[223px] left-[746px] z-40 h-5 w-[13px]" aria-label="Mauszeiger">
        <path d="M0.500 1v14.500l3.500-3 2.500 6 2.500-1-2.500-6h5z" fill="#ffffff" stroke="#000000" />
      </svg>
    </div>
  );
}
